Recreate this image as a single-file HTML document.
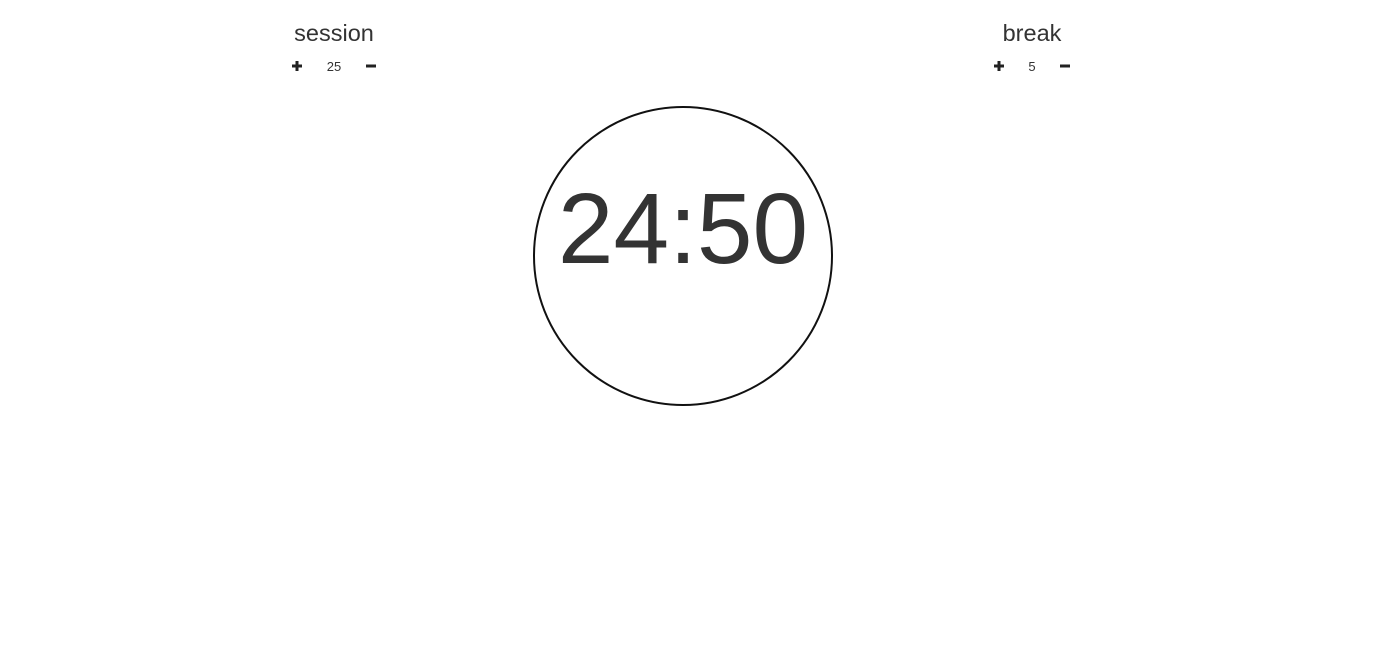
<!DOCTYPE html>
<html><head><style>
body{margin:0;width:1381px;height:665px;background:#fff;font-family:"Liberation Sans",sans-serif;color:#333;position:relative;overflow:hidden}
.lbl{position:absolute;font-size:23.5px;line-height:1;transform:translateX(-50%);top:22px}
.num{position:absolute;font-size:13px;line-height:1;transform:translateX(-50%);top:60px}
.ic{position:absolute;top:60px}
.circle{position:absolute;left:533px;top:106px;width:296px;height:296px;border:2px solid #111;border-radius:50%}
.time{position:absolute;left:683px;top:179px;transform:translateX(-50%);font-size:100px;line-height:1;white-space:nowrap}
</style></head><body>
<div class="lbl" style="left:334px">session</div>
<svg class="ic" style="left:291px" width="12" height="12"><path d="M1 6H11M6 1V11" stroke="#222" stroke-width="3"/></svg>
<div class="num" style="left:334px">25</div>
<svg class="ic" style="left:365px" width="12" height="12"><path d="M1 6H11" stroke="#222" stroke-width="3"/></svg>
<div class="lbl" style="left:1032px">break</div>
<svg class="ic" style="left:993px" width="12" height="12"><path d="M1 6H11M6 1V11" stroke="#222" stroke-width="3"/></svg>
<div class="num" style="left:1032px">5</div>
<svg class="ic" style="left:1059px" width="12" height="12"><path d="M1 6H11" stroke="#222" stroke-width="3"/></svg>
<div class="circle"></div>
<div class="time">24:50</div>
</body></html>
